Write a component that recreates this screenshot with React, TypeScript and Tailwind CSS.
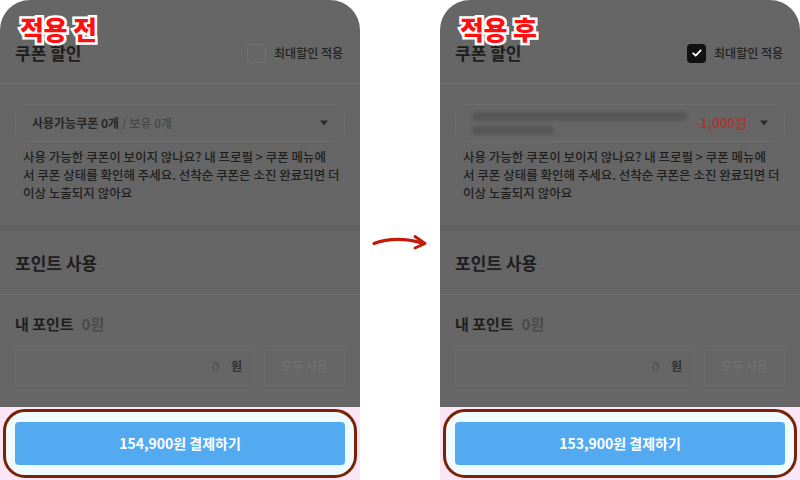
import React from 'react';

const font = { fontFamily: '"Noto Sans CJK KR", "Noto Sans", sans-serif' };

function Caret() {
  return (
    <svg width="10" height="6" viewBox="0 0 10 6" className="shrink-0">
      <path d="M1 0.5h8L5 5.5z" fill="#2b2b2b" />
    </svg>
  );
}

function Checkbox({ checked }: { checked: boolean }) {
  if (checked) {
    return (
      <div className="w-[19px] h-[19px] rounded-[4px] bg-[#111] flex items-center justify-center">
        <svg width="12" height="12" viewBox="0 0 12 12">
          <path d="M2.2 6.3l2.5 2.4 5-5.3" fill="none" stroke="#fff" strokeWidth="1.8" strokeLinecap="round" strokeLinejoin="round" />
        </svg>
      </div>
    );
  }
  return <div className="w-[19px] h-[19px] rounded-[4px] border border-[#727272]" />;
}

// one phone screen with the dim overlay
function Panel({ after }: { after: boolean }) {
  return (
    <div className="relative w-[360px] h-[480px] rounded-t-[30px] overflow-hidden bg-[#666666] flex flex-col" style={font}>
      <span className="absolute left-[20px] top-[11px] text-[26px] font-black text-[#ff1010] leading-[36px] tracking-[-0.3px] [-webkit-text-stroke:5px_white] [paint-order:stroke_fill]">
        {after ? '적용 후' : '적용 전'}
      </span>

      {/* 쿠폰 할인 */}
      <div className="h-[84px] px-[15px] pt-[38px] flex justify-between border-b border-[#6e6e6e]">
        <span className="text-[17px] font-bold text-[#1e1e1e] leading-[30px]">쿠폰 할인</span>
        <div className="flex items-center gap-[8px] h-[30px] pr-[2px]">
          <Checkbox checked={after} />
          <span className="text-[12px] font-medium text-[#222]">최대할인 적용</span>
        </div>
      </div>

      <div className="px-[15px] pt-[20px] h-[141px]">
        <div className="h-[38px] rounded-[10px] border border-[#6e6e6e] flex items-center justify-between pl-[16px] pr-[15px]">
          {after ? (
            <>
              <div className="flex flex-col gap-[5px] blur-[1.5px]">
                <div className="w-[215px] h-[9px] bg-[#575757] rounded-sm" />
                <div className="w-[82px] h-[9px] bg-[#575757] rounded-sm" />
              </div>
              <div className="flex items-center gap-[12px]">
                <span className="text-[13px] font-bold text-[#a33a33]">-1,000원</span>
                <Caret />
              </div>
            </>
          ) : (
            <>
              <span className="text-[12px] font-bold text-[#282828]">
                사용가능쿠폰 0개 <span className="font-medium text-[#464646]">/ 보유 0개</span>
              </span>
              <Caret />
            </>
          )}
        </div>
        <p className="mt-[6px] pl-[8px] text-[12.5px] font-medium leading-[18px] text-[#1f1f1f] whitespace-nowrap">
          사용 가능한 쿠폰이 보이지 않나요? 내 프로필 &gt; 쿠폰 메뉴에
          <br />
          서 쿠폰 상태를 확인해 주세요. 선착순 쿠폰은 소진 완료되면 더
          <br />
          이상 노출되지 않아요
        </p>
      </div>

      <div className="h-[6px] bg-[#616161]" />

      {/* 포인트 사용 */}
      <div className="h-[64px] px-[15px] flex items-center border-b border-[#6e6e6e]">
        <span className="text-[17px] font-bold text-[#1e1e1e]">포인트 사용</span>
      </div>

      <div className="px-[15px] pt-[18px] flex-1">
        <div className="flex items-baseline gap-[8px]">
          <span className="text-[15px] font-bold text-[#1e1e1e]">내 포인트</span>
          <span className="text-[15px] font-bold text-[#4a4a4a]">0원</span>
        </div>
        <div className="mt-[10px] flex gap-[9px]">
          <div className="w-[240px] h-[40px] border border-[#6c6c6c] rounded-[3px] flex items-center justify-end gap-[12px] pr-[12px]">
            <span className="text-[12px] text-[#4e4e4e]">0</span>
            <span className="text-[12px] font-bold text-[#333]">원</span>
          </div>
          <div className="flex-1 h-[40px] border border-[#6c6c6c] rounded-[3px] flex items-center justify-center">
            <span className="text-[12px] text-[#757575]">모두 사용</span>
          </div>
        </div>
      </div>

      {/* 결제 버튼 */}
      <div className="h-[73px] bg-[#fbe6f8] px-[3px] pt-[2px] pb-[2px]">
        <div className="h-full rounded-[22px] border-[3px] border-[#7a2206] bg-[#f0fbff] px-[9px] py-[10px]">
          <div className="h-full rounded-[4px] bg-[#53aaf1] flex items-center justify-center">
            <span className="text-[14px] font-bold text-white">{after ? '153,900원 결제하기' : '154,900원 결제하기'}</span>
          </div>
        </div>
      </div>
    </div>
  );
}

export default function App() {
  return (
    <div className="w-[800px] h-[480px] bg-white flex justify-between items-start overflow-hidden">
      <Panel after={false} />
      <div className="w-[80px] h-[480px] flex items-center justify-center">
        <svg width="60" height="20" viewBox="0 0 60 20" className="mt-[2px]">
          <path d="M4 12.5C18 7.5 36 7.5 52 12" fill="none" stroke="#c41a0a" strokeWidth="3.2" strokeLinecap="round" />
          <path d="M45 5.5L55 12.5L45 17" fill="none" stroke="#c41a0a" strokeWidth="3" strokeLinecap="round" strokeLinejoin="round" />
        </svg>
      </div>
      <Panel after={true} />
    </div>
  );
}
